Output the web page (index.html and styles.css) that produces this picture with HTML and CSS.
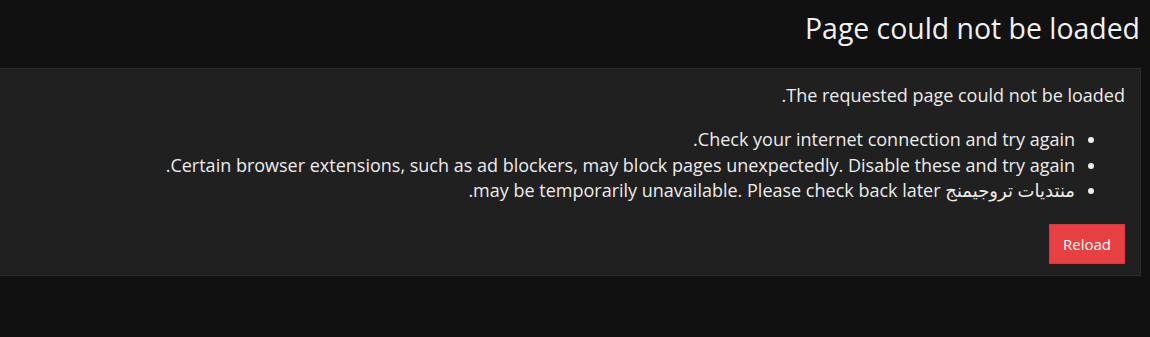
FILE: index.html
```html
<!DOCTYPE html>
<html dir="rtl" lang="ar">
<head>
<meta charset="utf-8">
<link rel="stylesheet" href="styles.css">
</head>
<body>
<div class="page">
  <h1 class="title">Page could not be loaded</h1>
  <div class="block">
    <p class="lead">The requested page could not be loaded.</p>
    <ul class="list">
      <li>Check your internet connection and try again.</li>
      <li>Certain browser extensions, such as ad blockers, may block pages unexpectedly. Disable these and try again.</li>
      <li>منتديات تروجيمنج may be temporarily unavailable. Please check back later.</li>
    </ul>
    <div class="actions">
      <button class="btn">Reload</button>
    </div>
  </div>
</div>
</body>
</html>
```

FILE: styles.css
```css
html, body {
  margin: 0;
  padding: 0;
  background: #111111;
}
body {
  font-family: "Open Sans", "DejaVu Sans", sans-serif;
  color: #ececec;
}
.page {
  padding: 0 9px 0 0;
}
.title {
  margin: 0;
  padding: 9px 1px 0 0;
  height: 68px;
  box-sizing: border-box;
  font-size: 28.4px;
  font-weight: 400;
  line-height: 38px;
  color: #f2f2f2;
}
.block {
  background: #202020;
  border: 1px solid #2a2a2a;
  border-left: none;
  padding: 13px 15px 12px 15px;
  height: 208px;
  box-sizing: border-box;
}
.lead {
  margin: 0;
  font-size: 18px;
  line-height: 26px;
}
.list {
  margin: 19px 0 0 0;
  padding: 0 50px 0 0;
  font-size: 18px;
  line-height: 25.5px;
}
.actions {
  display: flex;
  justify-content: flex-start;
  margin-top: 20px;
}
.btn {
  background: #e64043;
  color: #ffffff;
  border: 1px solid #e8333a;
  font-family: "Open Sans", "DejaVu Sans", sans-serif;
  font-size: 15px;
  width: 76px;
  height: 40px;
  padding: 0;
}
```
